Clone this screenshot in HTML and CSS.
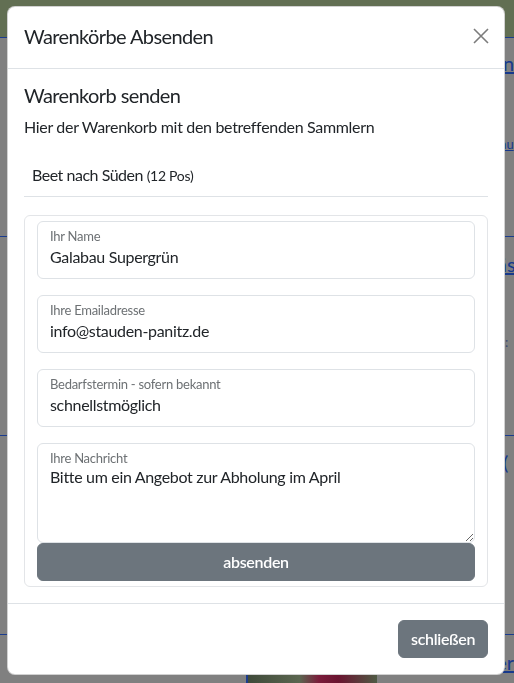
FILE: index.html
```html
<!DOCTYPE html>
<html lang="de">
<head>
<meta charset="utf-8">
<title>Warenkörbe Absenden</title>
<link rel="stylesheet" href="styles.css">
</head>
<body>
<div class="page">
  <div class="topbar"></div>
  <div class="section s1">
    <div class="links">
      <a class="lnk big">n</a>
      <a class="lnk small">au</a>
    </div>
  </div>
  <div class="section s2">
    <div class="links">
      <a class="lnk big">äs</a>
      <span class="lnk small plain">:</span>
    </div>
  </div>
  <div class="section s3">
    <div class="links">
      <a class="lnk big">(</a>
    </div>
  </div>
  <div class="section last">
    <div class="photo"></div>
    <div class="links tail">
      <a class="lnk big">er</a>
    </div>
  </div>
</div>

<div class="modal">
  <div class="modal-header">
    <h5 class="modal-title">Warenkörbe Absenden</h5>
    <button class="btn-close" type="button" aria-label="Schließen">
      <svg width="16" height="16" viewBox="0 0 16 16"><path d="M1 1L15 15M15 1L1 15" stroke="#7c7c7c" stroke-width="1.6" fill="none"/></svg>
    </button>
  </div>
  <div class="modal-body">
    <h5 class="sub">Warenkorb senden</h5>
    <p class="lead">Hier der Warenkorb mit den betreffenden Sammlern</p>
    <div class="item">Beet nach Süden <small>(12 Pos)</small></div>
    <div class="card">
      <div class="floating">
        <input type="text" value="Galabau Supergrün">
        <label>Ihr Name</label>
      </div>
      <div class="floating">
        <input type="text" value="info@stauden-panitz.de">
        <label>Ihre Emailadresse</label>
      </div>
      <div class="floating">
        <input type="text" value="schnellstmöglich">
        <label>Bedarfstermin - sofern bekannt</label>
      </div>
      <div class="floating area">
        <textarea>Bitte um ein Angebot zur Abholung im April</textarea>
        <label>Ihre Nachricht</label>
      </div>
      <button class="btn btn-block" type="button">absenden</button>
    </div>
  </div>
  <div class="modal-footer">
    <button class="btn" type="button">schließen</button>
  </div>
</div>
</body>
</html>
```
FILE: styles.css
```css
html, body {
  margin: 0;
  padding: 0;
}
body {
  background: #808080;
  font-family: Lato, "Open Sans", sans-serif;
  color: #212529;
  overflow: hidden;
  height: 683px;
}
.page {
  width: 514px;
}
.topbar {
  height: 37px;
  background: #626f53;
  border-bottom: 1px solid #1b3c8e;
}
.section {
  height: 198px;
  border-bottom: 1px solid #1b3c8e;
  display: flex;
  align-items: flex-start;
}
.section.last {
  border-bottom: none;
  height: 60px;
}
.links {
  margin-left: 497px;
  display: flex;
  flex-direction: column;
  align-items: flex-start;
  white-space: nowrap;
}
.s1 .links {
  padding-top: 12px;
  gap: 60px;
}
.s1 .lnk.big {
  margin-left: 6px;
}
.s2 .links {
  padding-top: 14px;
  gap: 57px;
}
.s3 .links {
  padding-top: 13px;
}
.s3 .lnk.big {
  margin-left: 6px;
}
.links.tail {
  margin-left: 119px;
  padding-top: 14px;
}
.lnk {
  color: #17398c;
  text-decoration: underline;
}
.lnk.big {
  font-size: 20px;
  line-height: 26px;
}
.lnk.small {
  font-size: 13px;
  line-height: 16px;
  margin-left: 3px;
}
.lnk.plain {
  text-decoration: none;
  color: #3a4a70;
  margin-left: 8px;
}
.photo {
  margin-left: 246px;
  width: 130px;
  height: 60px;
  border-left: 2px solid #1b3c8e;
  background: linear-gradient(90deg, #3f4a3a 0%, #5b6650 40%, #7a1c3a 55%, #6a1430 70%, #4f5a44 100%);
}

.modal {
  position: fixed;
  top: 6px;
  left: 7px;
  width: 498px;
  box-sizing: border-box;
  background: #fff;
  border: 1px solid rgba(0, 0, 0, 0.18);
  border-radius: 8px;
}
.modal-header {
  display: flex;
  align-items: center;
  justify-content: space-between;
  padding: 14px 16px 17px 16px;
  border-bottom: 1px solid #dee2e6;
}
.modal-title {
  margin: 0;
  font-size: 20px;
  line-height: 30px;
  font-weight: 400;
  letter-spacing: -0.03em;
}
.btn-close {
  border: 0;
  background: transparent;
  padding: 0;
  width: 16px;
  height: 16px;
  display: flex;
  margin-right: -1px;
}
.modal-body {
  padding: 14px 16px 16px 16px;
}
.sub {
  margin: 0 0 8px 0;
  font-size: 20px;
  line-height: 24px;
  font-weight: 400;
  letter-spacing: -0.03em;
}
.lead {
  margin: 0 0 16px 0;
  font-size: 16px;
  line-height: 24px;
  letter-spacing: -0.02em;
}
.item {
  padding: 8px;
  font-size: 16px;
  line-height: 24px;
  border-bottom: 1px solid #dee2e6;
  letter-spacing: -0.03em;
}
.item small {
  font-size: 14px;
  letter-spacing: -0.02em;
}
.card {
  margin-top: 18px;
  border: 1px solid #e3e5e8;
  border-radius: 6px;
  padding: 5px 12px;
}
.floating {
  position: relative;
  margin-bottom: 16px;
}
.floating.area {
  margin-bottom: 0;
}
.floating input,
.floating textarea {
  display: block;
  width: 100%;
  box-sizing: border-box;
  margin: 0;
  height: 58px;
  padding: 24px 12px 12px 12px;
  border: 1px solid #dee2e6;
  border-radius: 6px;
  font-family: Lato, "Open Sans", sans-serif;
  font-size: 16px;
  line-height: 20px;
  letter-spacing: -0.02em;
  color: #212529;
  background: #fff;
  outline: none;
}
.floating textarea {
  height: 100px;
  padding-top: 23px;
  resize: vertical;
}
.floating label {
  position: absolute;
  top: 7px;
  left: 13px;
  font-size: 13px;
  line-height: 17px;
  letter-spacing: -0.02em;
  color: #6d7174;
  pointer-events: none;
}
.btn {
  height: 38px;
  padding: 0 12px 2px 12px;
  border: 1px solid #6c757d;
  background: #6c757d;
  color: #fff;
  border-radius: 6px;
  font-family: Lato, "Open Sans", sans-serif;
  font-size: 16px;
  font-weight: 600;
  letter-spacing: -0.02em;
}
.btn-block {
  display: block;
  width: 100%;
}
.modal-footer {
  display: flex;
  justify-content: flex-end;
  padding: 16px;
  border-top: 1px solid #dee2e6;
}
.modal-footer .btn {
  width: 90px;
}
```
